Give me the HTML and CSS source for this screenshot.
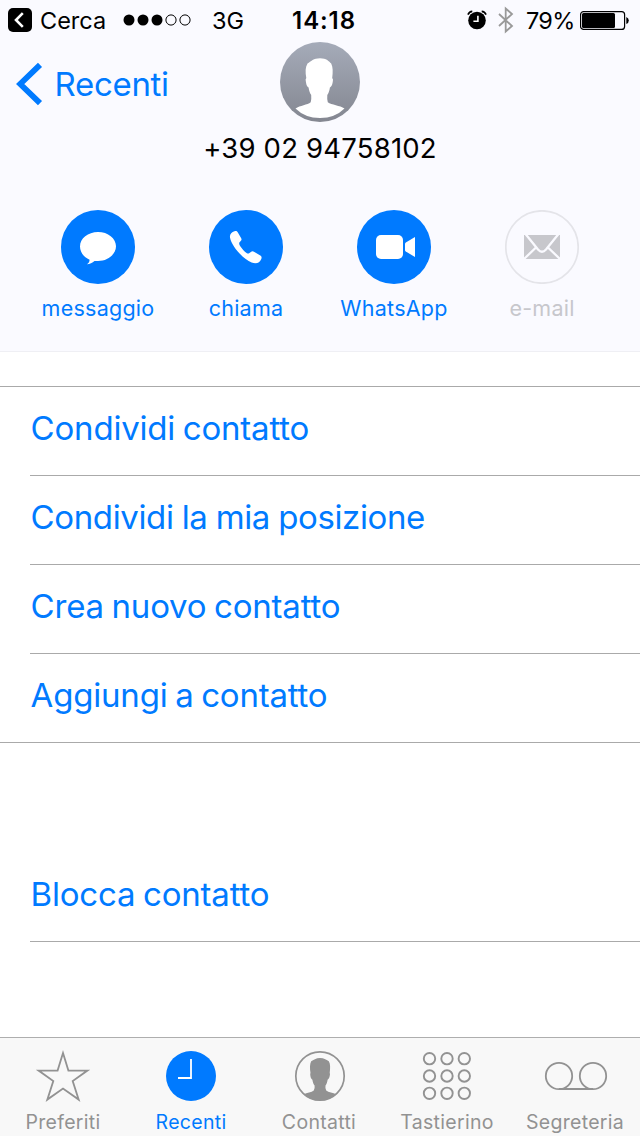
FILE: index.html
```html
<!DOCTYPE html>
<html lang="it">
<head>
<meta charset="utf-8">
<title>Contatto</title>
<link rel="stylesheet" href="styles.css">
</head>
<body>
<div class="screen">
  <header class="header">
    <div class="status">
      <div class="status-left">
        <svg class="status-back" width="24" height="24" viewBox="0 0 24 24"><rect width="24" height="24" rx="5"/><path d="M14.800 5.200 8 12l6.800 6.800" fill="none" stroke="#fff" stroke-width="2.600"/></svg>
        <span class="search">Cerca</span>
        <svg class="signal" width="68" height="12" viewBox="0 0 68 12"><circle cx="6" cy="6" r="5.500"/><circle cx="20" cy="6" r="5.500"/><circle cx="34" cy="6" r="5.500"/><g fill="none" stroke="#000"><circle cx="48" cy="6" r="5.100"/><circle cx="62" cy="6" r="5.100"/></g></svg>
        <span class="network">3G</span>
      </div>
      <span class="time">14:18</span>
      <div class="status-right">
        <svg width="20" height="20" viewBox="0 0 20 20"><circle cx="10" cy="10.500" r="8.800"/><path d="M.9 4.600Q2.300 1.700 5.300 1.400M19.100 4.600Q17.700 1.700 14.700 1.400" fill="none" stroke="#000" stroke-width="1.600"/><path d="M10.900 5.800v5.500H6.400" fill="none" stroke="#fff" stroke-width="1.600"/></svg>
        <svg class="bluetooth" width="16" height="28" viewBox="0 0 16 28"><path d="m1 8 13 12-6.300 5.500v-23L14 8 1 20" fill="none" stroke="#999" stroke-width="1.800"/></svg>
        <span class="percent">79%</span>
        <svg class="battery" width="50" height="20" viewBox="0 0 50 20"><rect x=".6" y="1.600" width="44" height="17.800" rx="3" fill="none" stroke="#000" stroke-width="1.200"/><rect x="2" y="3" width="33" height="15" rx="1.500"/><path d="M46.300 7q2.500 1 2.500 3.500t-2.500 3.500z"/></svg>
      </div>
    </div>
    <div class="nav">
      <a class="back"><svg width="28" height="44" viewBox="0 0 28 44"><path d="M25 2.800 5.200 22 25 41.200" fill="none" stroke="#007aff" stroke-width="5.800"/></svg><span>Recenti</span></a>
      <svg class="avatar" width="80" height="80" viewBox="0 0 80 80">
        <defs><linearGradient id="shade" x2="0" y2="1"><stop stop-color="#a5abb9"/><stop offset="1" stop-color="#848791"/></linearGradient></defs>
        <circle cx="40" cy="40" r="40" fill="url(#shade)"/>
        <path fill="#fff" d="M15.500 66.500C20 63.500 27.500 63 30.700 60.300Q31.600 57 31.200 53C29.500 50.500 29 48 28.600 45.500C26.500 44.500 26 41 25.600 37.500L26.300 36C25.200 30 25.300 25 27.500 21.500C31 19.500 33.500 16.300 40 16.300S49 19.500 51.200 21.500C53 25 53 30 52.200 36L53 37.500C52.800 41 52 44.500 49.900 45.500C49.500 48 49 50.500 47.300 53Q46.900 57 47.800 60.300C51.500 63 60 63.500 64.500 66.500Q55 76 40 76T15.500 66.500"/>
      </svg>
    </div>
    <div class="number">+39 02 94758102</div>
    <div class="actions">
      <a class="action">
        <svg width="74" height="74" viewBox="0 0 74 74"><circle cx="37" cy="37" r="37" fill="#007aff"/><path fill="#fff" d="M37 22c10 0 18 6.400 18 14.300S47 51 37 51h-3.500c-2 2-4.700 3.200-7.700 3.200 1.800-1 2.700-2.500 2.800-4.500C22.500 47 19 42 19 36.500 19 28.400 27 22 37 22"/></svg>
        <span>messaggio</span>
      </a>
      <a class="action">
        <svg width="74" height="74" viewBox="0 0 74 74"><circle cx="37" cy="37" r="37" fill="#007aff"/><path fill="#fff" d="M25.500 21.200c1.800-.6 2.700 0 3.500 1.500l3.200 5.500c.7 1.300.3 2-.5 2.700-2 1.600-1.800 3-.6 5.100 2 3 4 5.200 6.800 7.200 1.700.9 2.600-.2 4-1.300 1.100-.9 2.300-.6 3.500.1l5.500 3.300c2 1.100 1.900 2.300 1.400 3.700-1.500 4.200-5.500 5-9.700 3.400C33.500 48.700 22.500 36 21 27.500c-.5-3 1.500-5.300 4.500-6.300"/></svg>
        <span>chiama</span>
      </a>
      <a class="action">
        <svg width="74" height="74" viewBox="0 0 74 74"><circle cx="37" cy="37" r="37" fill="#007aff"/><rect x="19" y="25" width="27" height="24" rx="5" fill="#fff"/><path d="M48 34q0-1 .8-1.600L58 27v20l-9.200-5.400Q48 41 48 40z" fill="#fff"/></svg>
        <span>WhatsApp</span>
      </a>
      <a class="action disabled">
        <svg width="74" height="74" viewBox="0 0 74 74"><circle cx="37" cy="37" r="36.200" fill="none" stroke="#e4e4e9" stroke-width="1.700"/><path fill="#c7c7cc" d="M19 25h36v24H19z"/><path d="M20.500 24 33 39.500q4 4.500 8 0L53.500 24M18.500 49.500 31.500 37M55.500 49.500 42.500 37" fill="none" stroke="#fafaff" stroke-width="2.300"/></svg>
        <span>e-mail</span>
      </a>
    </div>
  </header>
  <main class="content">
    <ul class="list">
      <li>Condividi contatto</li>
      <li class="long">Condividi la mia posizione</li>
      <li>Crea nuovo contatto</li>
      <li>Aggiungi a contatto</li>
    </ul>
    <div class="block">Blocca contatto</div>
  </main>
  <nav class="tabs">
    <a class="tab">
      <svg width="56" height="56" viewBox="0 0 56 56" fill="none" stroke="#929292" stroke-width="1.800"><path d="m28 5 5.400 17.600h19L37.700 33l6 18.600L28 40.600l-15.700 11 6-18.600L3.600 22.600h19z"/></svg>
      <span>Preferiti</span>
    </a>
    <a class="tab active">
      <svg width="56" height="56" viewBox="0 0 56 56"><circle cx="28" cy="28" r="25" fill="#007aff"/><path d="M28 11v19H15" fill="none" stroke="#fff" stroke-width="1.800"/></svg>
      <span>Recenti</span>
    </a>
    <a class="tab">
      <svg width="56" height="56" viewBox="0 0 56 56"><circle cx="29" cy="28" r="24.200" fill="none" stroke="#929292" stroke-width="1.700"/><path fill="#929292" d="M12.500 46.500C16 44.500 20.500 44.500 22.800 42.500Q24 40.500 23.600 37.500C22.200 36 21.700 33.500 21.400 31.700C19.800 31 19.300 28.500 19.200 26L19.500 25C18.700 20 18.800 16 20.200 13.200C22.500 12.300 25 10 29 10S36 12 37.800 13.200C39.500 16 39.300 20 38.700 25L39 26C38.800 28.500 38.200 31 36.600 31.700C36.300 33.500 35.800 36 34.500 37.500Q34 40.500 35.200 42.500C37.500 44.500 42 44.500 45.500 46.500Q38 52.500 29 52.500T12.500 46.500"/></svg>
      <span>Contatti</span>
    </a>
    <a class="tab">
      <svg width="56" height="56" viewBox="0 0 56 56" fill="none" stroke="#929292" stroke-width="1.900"><circle cx="10.500" cy="10.700" r="5.700"/><circle cx="28" cy="10.700" r="5.700"/><circle cx="45.300" cy="10.700" r="5.700"/><circle cx="10.500" cy="28" r="5.700"/><circle cx="28" cy="28" r="5.700"/><circle cx="45.300" cy="28" r="5.700"/><circle cx="10.500" cy="45.300" r="5.700"/><circle cx="28" cy="45.300" r="5.700"/><circle cx="45.300" cy="45.300" r="5.700"/></svg>
      <span>Tastierino</span>
    </a>
    <a class="tab">
      <svg width="66" height="56" viewBox="0 0 66 56" fill="none" stroke="#929292" stroke-width="1.800"><circle cx="17" cy="28" r="13.200"/><circle cx="51" cy="28" r="13.200"/><path d="M17 41h34"/></svg>
      <span>Segreteria</span>
    </a>
  </nav>
</div>
</body>
</html>
```
FILE: styles.css
```css
* { box-sizing: border-box; }
body { margin: 0; font-family: Inter, "Liberation Sans", sans-serif; }
svg { display: block; flex: none; }
.screen { width: 640px; height: 1136px; display: flex; flex-direction: column; background: #fff; overflow: hidden; }
.header { height: 352px; flex: none; background: #fafaff; border-bottom: 1px solid #efeff4; }

.status { height: 40px; display: grid; grid-template: 40px / 280px 86px 1fr; font-size: 23.5px; line-height: 39px; white-space: nowrap; }
.status-left, .status-right { display: flex; align-items: center; }
.status-left { padding-left: 8px; }
.search { width: 90px; flex: none; padding-left: 8px; }
.signal { margin-left: 0.5px; }
.network { margin-left: 21.5px; }
.time { text-align: center; font-size: 24px; font-weight: 600; letter-spacing: 0.9px; padding-left: 2px; line-height: 42px; }
.status-right { padding-left: 101px; }
.bluetooth { margin-left: 11px; }
.percent { width: 54px; margin-left: 12px; letter-spacing: -0.7px; }
.battery { width: 50px; }

.nav { height: 91px; display: grid; grid-template-columns: 280px 80px 280px; }
.back { display: flex; align-items: center; height: 88px; padding-left: 15px; color: #007aff; font-size: 33px; line-height: 88px; letter-spacing: -0.3px; }
.back span { margin-left: 11.5px; }
.avatar { margin-top: 2px; }
.number { height: 79px; font-size: 27.5px; line-height: 34px; letter-spacing: 0.2px; text-align: center; color: #000; }

.actions { display: grid; grid-template-columns: repeat(4, 148px); padding-left: 24px; }
.action { display: flex; flex-direction: column; align-items: center; color: #007aff; font-size: 21.5px; line-height: 49px; letter-spacing: 0.25px; }
.disabled { color: #c7c7cc; }

.content { flex: 1; padding-top: 34px; }
.list { list-style: none; margin: 0; padding: 0 0 0 30px; border-top: 1px solid #aaa; border-bottom: 1px solid #aaa; }
.list li, .block { height: 89px; padding-left: 0.6px; border-bottom: 1px solid #aaa; color: #007aff; font-size: 33px; line-height: 82px; letter-spacing: -0.2px; word-spacing: -1.4px; white-space: nowrap; }
.list .long { letter-spacing: -0.38px; word-spacing: -0.7px; }
.list li:last-child { height: 88px; border-bottom: 0; }
.block { margin: 110px 0 0 30px; }

.tabs { height: 99px; flex: none; display: grid; grid-template-columns: repeat(5, 128px); padding-top: 10px; background: #f8f8f8; border-top: 1px solid #aeaeae; }
.tab { display: flex; flex-direction: column; align-items: center; color: #929292; font-size: 19.5px; line-height: 37px; letter-spacing: 0.3px; margin-left: -2px; }
.active { color: #007aff; }
```
